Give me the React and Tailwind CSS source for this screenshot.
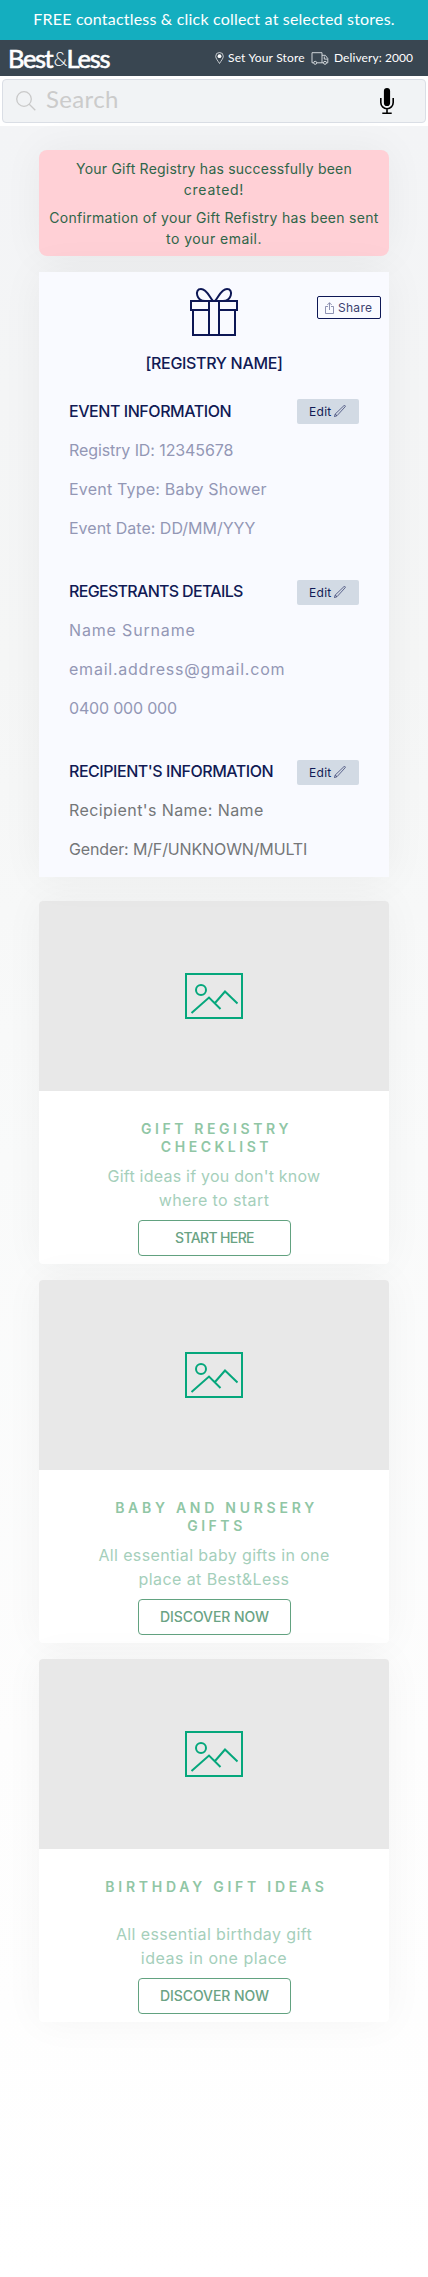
import React from 'react';

const heading = 'text-[16px] font-medium leading-6 text-[#111a55] whitespace-nowrap';

function Header() {
  return (
    <header className="font-[Lato,sans-serif]">
      <div className="flex h-10 items-center justify-center bg-[#14aebf] pb-[3px] text-[16px] tracking-[0.194px] text-white whitespace-nowrap">
        FREE contactless &amp; click collect at selected stores.
      </div>
      <div className="flex h-9 items-center bg-[#394651] pl-2 text-white">
        <div className="flex h-9 w-[207px] items-center text-[25.5px] leading-9 whitespace-nowrap">
          <span className="w-[45.5px] tracking-[-1.4px] [-webkit-text-stroke:0.6px_white]">Best</span>
          <span className="w-[13px] text-[20px] font-light tracking-[-1px]">&amp;</span>
          <span className="tracking-[-1.2px] [-webkit-text-stroke:0.6px_white]">Less</span>
        </div>
        <svg className="h-3 w-[9px] shrink-0" viewBox="0 0 9 12" fill="none" stroke="#e6e9eb" strokeWidth="0.8">
          <path d="M4.5 11.5C3 9 .7 6.500 .7 4.300a3.800 3.800 0 0 1 7.600 0C8.300 6.500 6 9 4.500 11.500Z" />
          <circle cx="4.500" cy="4.200" r="1.900" fill="#fff" stroke="none" />
        </svg>
        <span className="ml-1 w-[83px] pb-px text-[12px] leading-4 tracking-[0.178px] whitespace-nowrap">Set Your Store</span>
        <svg className="mt-px h-[13px] w-[18px] shrink-0" viewBox="0 0 18 13" fill="none" stroke="#dfe3e6" strokeWidth="0.9">
          <path d="M2.600 10.800H1V.7h10v10.100H5.800M11 3.300h3.300l2.500 3.200v4.300h-1.100M12.400 10.800H11M13.300 4.500v2.600h3.300" />
          <circle cx="4.200" cy="10.800" r="1.500" />
          <circle cx="14" cy="10.800" r="1.500" />
        </svg>
        <span className="ml-[5px] pb-px text-[12px] leading-4 tracking-[0.08px] whitespace-nowrap">Delivery: 2000</span>
      </div>
      <div className="h-[50px] bg-white px-0.5 pt-[3px]">
        <div className="flex h-11 items-center rounded border border-[#dadee5] bg-[#f1f3f5] pl-[13px] pr-[31px]">
          <svg className="h-5 w-5" viewBox="0 0 20 20" fill="none" stroke="#c9c9c9" strokeWidth="1.300">
            <circle cx="8" cy="8" r="7.300" />
            <path d="M13 13l6.300 6.300" />
          </svg>
          <span className="ml-2.5 flex-1 pb-1 text-[24px] leading-8 tracking-[0.35px] text-[#cbcbcb]">Search</span>
          <svg className="h-[26px] w-[14px]" viewBox="0 0 14 26" fill="none" stroke="#000" strokeWidth="1.600">
            <rect x="3.900" y="0" width="6.200" height="18" rx="3.100" fill="#000" stroke="none" />
            <path d="M.8 10v4.500a6.200 6.200 0 0 0 12.400 0V10M7 20.500V25M2.300 25.200h9.400" />
          </svg>
        </div>
      </div>
    </header>
  );
}

function GiftIcon() {
  return (
    <svg className="h-12 w-12" viewBox="0 0 48 48" fill="none" stroke="#0d1755" strokeWidth="2">
      <path d="M1 13h18v9H1zM29 13h18v9H29zM19 13h10v34H19zM3 22v25h42V22" />
      <path d="M23 13C19.500 9.500 17 1 11 1 7.500 1 6.200 4 7.300 7.500 8.300 11 11.500 13 15 13M25 13C28.500 9.500 31 1 37 1c3.500 0 4.800 3 3.700 6.500C39.700 11 36.500 13 33 13" />
    </svg>
  );
}

function EditButton({ offset }) {
  return (
    <button className={`flex h-[25px] w-[62px] items-center rounded-[2px] bg-[#d2dae4] pl-3 text-[12px] leading-4 tracking-[0.3px] text-[#111a55] ${offset}`}>
      <span className="w-[25px] text-left">Edit</span>
      <svg className="-mt-px h-3 w-3 shrink-0" viewBox="0 0 12 12" fill="none" stroke="#2b3468" strokeWidth="0.7">
        <path d="M.4 11.600l.8-2.600L9.900.7q.7-.6 1.200-.1t0 1.200L3 10.700ZM1.200 9L3 10.700" />
      </svg>
    </button>
  );
}

const sections = [
  {
    title: 'EVENT INFORMATION', track: 'tracking-[-0.444px]', color: 'text-[#9397b5]', offset: 'mt-0',
    rows: [
      ['Registry ID: 12345678', 'tracking-[-0.097px]'],
      ['Event Type: Baby Shower', 'tracking-[0.206px]'],
      ['Event Date: DD/MM/YYY', 'tracking-[0px]'],
    ],
  },
  {
    title: 'REGESTRANTS DETAILS', track: 'tracking-[-0.682px]', color: 'text-[#9397b5]', offset: 'mt-px',
    rows: [
      ['Name Surname', 'tracking-[0.833px]'],
      ['email.address@gmail.com', 'tracking-[0.768px]'],
      ['0400 000 000', 'tracking-[-0.19px]'],
    ],
  },
  {
    title: "RECIPIENT'S INFORMATION", track: 'tracking-[-0.463px]', color: 'text-[#747678]', offset: 'mt-px',
    rows: [
      ["Recipient's Name: Name", 'tracking-[0.41px]'],
      ['Gender: M/F/UNKNOWN/MULTI', 'tracking-[-0.133px]'],
    ],
  },
];

function Section({ title, track, color, rows, offset }) {
  return (
    <section className="px-[30px]">
      <div className="flex h-[27px] items-start justify-between">
        <h2 className={`${heading} ${track}`}>{title}</h2>
        <EditButton offset={offset} />
      </div>
      <div className="mt-3 flex flex-col gap-[15px]">
        {rows.map(([text, spacing]) => (
          <p key={text} className={`text-[16px] leading-6 whitespace-nowrap ${color} ${spacing}`}>{text}</p>
        ))}
      </div>
    </section>
  );
}

const cards = [
  {
    title: [['GIFT REGISTRY', 'tracking-[3.589px]'], ['CHECKLIST', 'tracking-[3.527px]']],
    body: [["Gift ideas if you don't know", 'tracking-[0.224px]'], ['where to start', 'tracking-[0.411px]']],
    action: 'START HERE', actionTrack: 'tracking-[-0.642px]',
  },
  {
    title: [['BABY AND NURSERY', 'tracking-[3.733px]'], ['GIFTS', 'tracking-[3.541px]']],
    body: [['All essential baby gifts in one', 'tracking-[0.362px]'], ['place at Best&Less', 'tracking-[0.415px]']],
    action: 'DISCOVER NOW', actionTrack: 'tracking-[-0.076px]',
  },
  {
    title: [['BIRTHDAY GIFT IDEAS', 'tracking-[3.752px]']],
    body: [['All essential birthday gift', 'tracking-[0.385px]'], ['ideas in one place', 'tracking-[0.524px]']],
    action: 'DISCOVER NOW', actionTrack: 'tracking-[-0.076px]',
  },
];

function Card({ title, body, action, actionTrack }) {
  return (
    <article className="h-[363px] rounded bg-white shadow-[0_0_40px_rgba(0,0,0,0.045)]">
      <div className="flex h-[190px] items-center justify-center rounded-t bg-[#e8e8e8]">
        <svg className="h-[46px] w-[58px]" viewBox="0 0 58 46" fill="none" stroke="#05a77c" strokeWidth="2">
          <path d="M1 1h56v44H1zM6.500 40L24 24.500 35.500 36M30 30L40 18.500 52.500 30.500" />
          <circle cx="16" cy="17" r="5" />
        </svg>
      </div>
      <div className="flex flex-col items-center pt-[29px]">
        <h3 className="h-9 text-center text-[14px] font-semibold leading-[18px] text-[#90c6a5]">
          {title.map(([text, spacing]) => (
            <span key={text} className={`block pl-[5px] whitespace-nowrap ${spacing}`}>{text}</span>
          ))}
        </h3>
        <p className="mt-2 text-center text-[16px] leading-6 text-[#a5cfbb]">
          {body.map(([text, spacing]) => (
            <span key={text} className={`block whitespace-nowrap ${spacing}`}>{text}</span>
          ))}
        </p>
        <button className={`ml-px mt-2 h-9 w-[153px] rounded border border-[#62a280] text-[14px] font-medium leading-5 text-[#6aa384] ${actionTrack}`}>
          {action}
        </button>
      </div>
    </article>
  );
}

export default function App() {
  return (
    <div className="h-[2277px] w-[428px] overflow-hidden bg-white font-[Inter,sans-serif]">
      <Header />
      <main className="h-[2151px] bg-[linear-gradient(180deg,#f3f4f6_0%,#f5f6f6_25%,#f9fafa_48%,#fdfdfd_75%,#ffffff_100%)] px-[39px] pt-6">
        <div className="h-[106px] rounded-lg bg-[#ffd0d6] pt-2 text-center text-[14px] leading-[21px] text-[#2f6549] shadow-[0_0_40px_rgba(0,0,0,0.05)] whitespace-nowrap">
          <p className="tracking-[0.227px]">Your Gift Registry has successfully been</p>
          <p className="tracking-[0.732px]">created!</p>
          <p className="mt-[7px] tracking-[0.289px]">Confirmation of your Gift Refistry has been sent</p>
          <p className="tracking-[0.475px]">to your email.</p>
        </div>
        <div className="relative mt-4 h-[605px] bg-[#f9faff] pt-4 shadow-[0_0_40px_rgba(0,0,0,0.05)]">
          <button className="absolute right-2 top-6 flex h-[23px] w-16 items-center rounded-[2px] border border-[#0d1755] pl-[7px] text-[12px] leading-4 tracking-[0.287px] text-[#3b416f]">
            <svg className="mr-1 h-3 w-[9px] shrink-0" viewBox="0 0 9 12" fill="none" stroke="#7478a0" strokeWidth="0.8">
              <path d="M3 4.500H.5v7h8v-7H6M4.500 8V.8M2.300 3L4.500.7 6.700 3" />
            </svg>
            Share
          </button>
          <div className="flex flex-col items-center">
            <GiftIcon />
            <h1 className={`mt-[15px] tracking-[-0.326px] ${heading}`}>[REGISTRY NAME]</h1>
          </div>
          <div className="mt-6 flex flex-col gap-[39px]">
            {sections.map((section) => (
              <Section key={section.title} {...section} />
            ))}
          </div>
        </div>
        <div className="mt-6 flex flex-col gap-4">
          {cards.map((card) => (
            <Card key={card.title[0][0]} {...card} />
          ))}
        </div>
      </main>
    </div>
  );
}
